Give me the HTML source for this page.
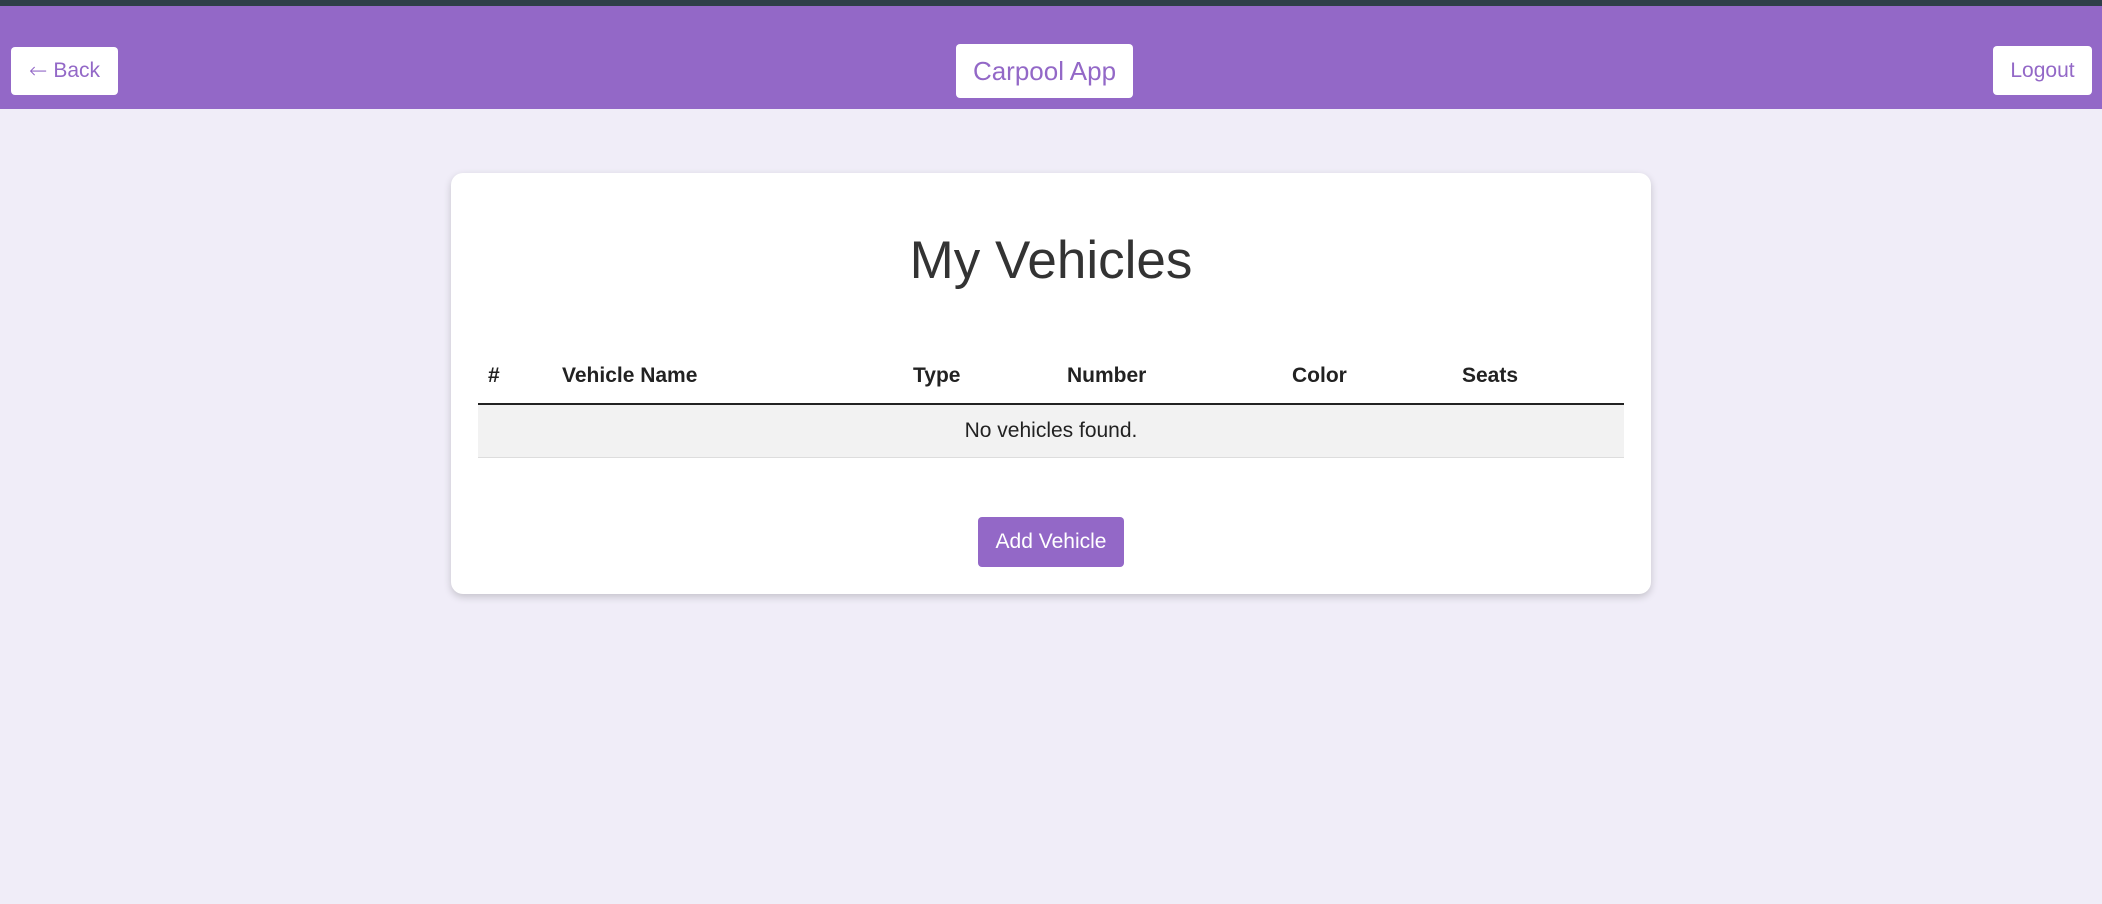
<!DOCTYPE html>
<html><head><meta charset="utf-8"><style>
*{box-sizing:border-box;margin:0;padding:0}
body{width:2102px;height:904px;background:#f0edf8;font-family:"Liberation Sans",Arial,sans-serif;position:relative;overflow:hidden}
.top{position:absolute;left:0;top:0;width:2102px;height:6px;background:#2f3f48}
.hdr{position:absolute;left:0;top:6px;width:2102px;height:103px;background:#9368c7}
.btn{position:absolute;background:#fff;border-radius:4px;color:#9368c7;display:flex;align-items:center;justify-content:center}
.card{position:absolute;left:451px;top:173px;width:1200px;height:421px;background:#fff;border-radius:12px;box-shadow:0 3px 8px rgba(0,0,0,0.18)}
h1{position:absolute;left:0;width:100%;top:231px;text-align:center;font-weight:normal;font-size:53px;color:#333;line-height:60px}
.th{position:absolute;top:364px;font-weight:bold;font-size:21px;color:#222;line-height:24px}
</style></head><body>
<div class="top"></div>
<div class="hdr"></div>
<div class="btn" style="left:11px;top:47px;width:107px;height:48px;font-size:21px"><span style="font-family:'DejaVu Sans',sans-serif;font-size:22px;font-weight:200;margin-right:6px">←</span>Back</div>
<div class="btn" style="left:956px;top:44px;width:177px;height:54px;font-size:26px">Carpool App</div>
<div class="btn" style="left:1993px;top:46px;width:99px;height:49px;font-size:21px">Logout</div>
<div class="card"></div>
<h1>My Vehicles</h1>
<div class="th" style="left:488px">#</div>
<div class="th" style="left:562px">Vehicle Name</div>
<div class="th" style="left:913px">Type</div>
<div class="th" style="left:1067px">Number</div>
<div class="th" style="left:1292px">Color</div>
<div class="th" style="left:1462px">Seats</div>
<div style="position:absolute;left:478px;top:403px;width:1146px;height:2px;background:#222"></div>
<div style="position:absolute;left:478px;top:405px;width:1146px;height:53px;background:#f2f2f2;border-bottom:1px solid #ddd;text-align:center;line-height:52px;font-size:21px;color:#222">No vehicles found.</div>
<div style="position:absolute;left:978px;top:517px;width:146px;height:50px;background:#9368c7;border-radius:4px;color:#fff;font-size:21px;display:flex;align-items:center;justify-content:center">Add Vehicle</div>
</body></html>
